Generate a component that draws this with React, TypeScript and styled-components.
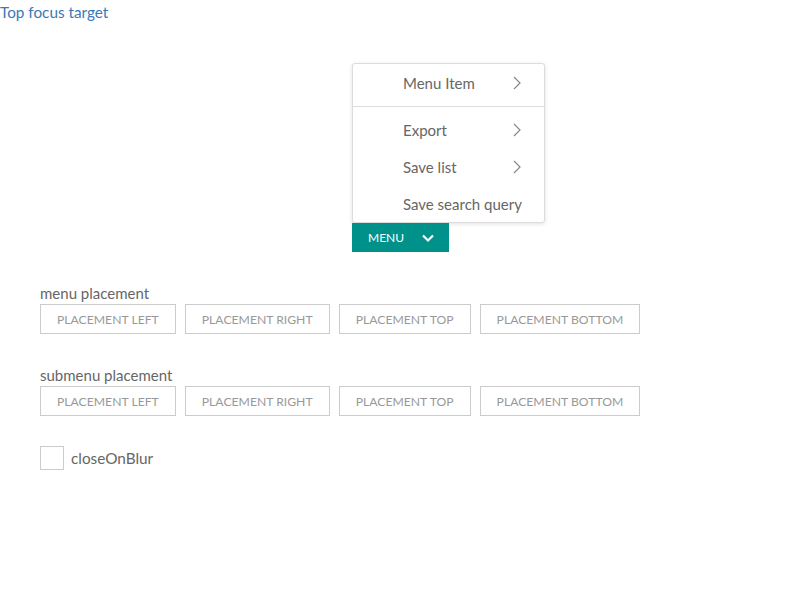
import { FC } from "react";
import styled, { createGlobalStyle } from "styled-components";

const GlobalStyle = createGlobalStyle`
  body {
    margin: 0;
    font-family: "Lato", "Open Sans", sans-serif;
    background: #fff;
  }
`;

const Page = styled.div`
  width: 800px;
  height: 600px;
  display: flex;
  flex-direction: column;
`;

const TopLink = styled.a`
  color: #3b79b6;
  font-size: 15.3px;
  line-height: 24px;
  text-decoration: none;
  align-self: flex-start;
`;

const MenuArea = styled.div`
  margin-top: 39px;
  margin-left: 352px;
  display: flex;
  flex-direction: column;
  align-items: flex-start;
`;

const Popup = styled.ul`
  list-style: none;
  margin: 0;
  padding: 0;
  width: 191px;
  background: #fff;
  border: 1px solid #dcdcdc;
  border-radius: 3px;
  box-shadow: 0 1px 4px rgba(0, 0, 0, 0.12);
`;

const Item = styled.li<{ divided?: boolean }>`
  display: flex;
  align-items: center;
  justify-content: space-between;
  height: 37px;
  padding: 0 22px 0 50px;
  padding-bottom: ${(p) => (p.divided ? "5px" : "0")};
  color: #666;
  font-size: 15px;
  border-bottom: ${(p) => (p.divided ? "1px solid #ddd" : "none")};
  margin-bottom: ${(p) => (p.divided ? "4px" : "0")};
`;

const Chevron: FC<{ dir: "right" | "down"; color: string }> = ({ dir, color }) =>
  dir === "right" ? (
    <svg width="10" height="14" viewBox="0 0 10 14">
      <path d="M2 1l6 6-6 6" fill="none" stroke={color} strokeWidth="1.2" />
    </svg>
  ) : (
    <svg width="14" height="10" viewBox="0 0 14 10">
      <path d="M2 2.5l5 5 5-5" fill="none" stroke={color} strokeWidth="2.2" />
    </svg>
  );

const MenuButton = styled.button`
  display: flex;
  align-items: center;
  gap: 17px;
  height: 29px;
  padding: 0 14px 0 16px;
  border: none;
  background: #00928a;
  color: #fff;
  font-family: inherit;
  font-size: 12px;
  text-transform: uppercase;
`;

const Section = styled.section<{ top: number }>`
  margin: ${(p) => p.top}px 0 0 40px;
  display: flex;
  flex-direction: column;
`;

const Label = styled.div`
  color: #666;
  font-size: 15px;
  line-height: 21px;
`;

const ButtonRow = styled.div`
  display: flex;
  gap: 9px;
`;

const PlacementButton = styled.button`
  height: 30px;
  padding: 0 16px;
  border: 1px solid #ccc;
  background: #fff;
  color: #999;
  font-family: inherit;
  font-size: 12.2px;
  text-transform: uppercase;
`;

const CheckRow = styled.label`
  margin: 30px 0 0 40px;
  display: flex;
  align-items: center;
  gap: 7px;
  color: #666;
  font-size: 15.3px;
`;

const Box = styled.span`
  width: 22px;
  height: 22px;
  border: 1px solid #ccc;
  background: #fff;
`;

const placements = [
  "Placement left",
  "Placement right",
  "Placement top",
  "Placement bottom",
];

const Placements: FC<{ title: string; top: number }> = ({ title, top }) => (
  <Section top={top}>
    <Label>{title}</Label>
    <ButtonRow>
      {placements.map((text) => (
        <PlacementButton key={text}>{text}</PlacementButton>
      ))}
    </ButtonRow>
  </Section>
);

const App: FC = () => (
  <Page>
    <GlobalStyle />
    <TopLink href="#">Top focus target</TopLink>
    <MenuArea>
      <Popup>
        <Item divided>
          Menu Item <Chevron dir="right" color="#888" />
        </Item>
        <Item>
          Export <Chevron dir="right" color="#888" />
        </Item>
        <Item>
          Save list <Chevron dir="right" color="#888" />
        </Item>
        <Item>Save search query</Item>
      </Popup>
      <MenuButton>
        Menu <Chevron dir="down" color="#fff" />
      </MenuButton>
    </MenuArea>
    <Placements title="menu placement" top={31} />
    <Placements title="submenu placement" top={31} />
    <CheckRow>
      <Box />
      closeOnBlur
    </CheckRow>
  </Page>
);

export default App;
